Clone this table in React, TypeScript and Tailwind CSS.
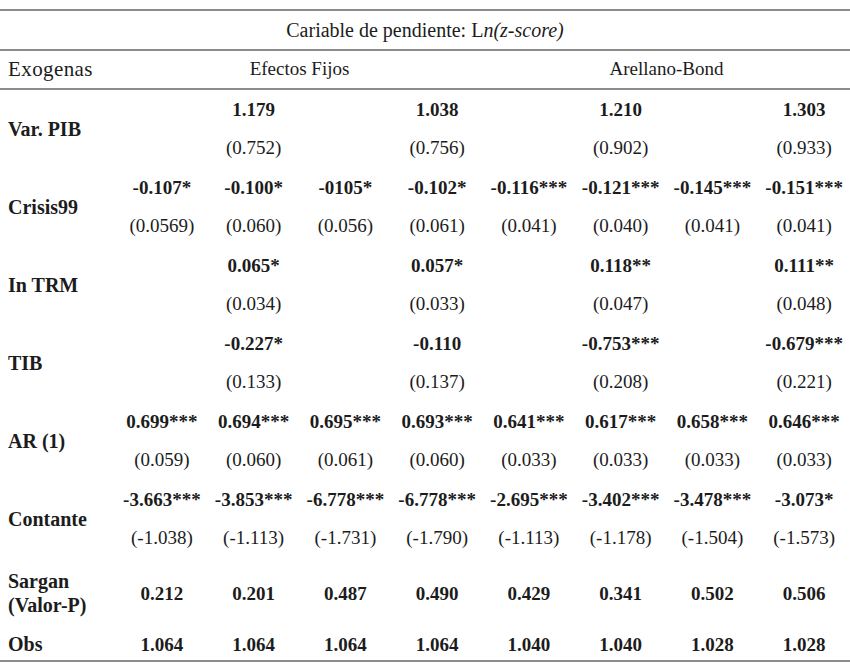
const rows: { label: string[]; top: string[]; sub?: string[]; h?: string }[] = [
  {
    label: ["Var. PIB"],
    top: ["", "1.179", "", "1.038", "", "1.210", "", "1.303"],
    sub: ["", "(0.752)", "", "(0.756)", "", "(0.902)", "", "(0.933)"],
  },
  {
    label: ["Crisis99"],
    top: ["-0.107*", "-0.100*", "-0105*", "-0.102*", "-0.116***", "-0.121***", "-0.145***", "-0.151***"],
    sub: ["(0.0569)", "(0.060)", "(0.056)", "(0.061)", "(0.041)", "(0.040)", "(0.041)", "(0.041)"],
  },
  {
    label: ["In TRM"],
    top: ["", "0.065*", "", "0.057*", "", "0.118**", "", "0.111**"],
    sub: ["", "(0.034)", "", "(0.033)", "", "(0.047)", "", "(0.048)"],
  },
  {
    label: ["TIB"],
    top: ["", "-0.227*", "", "-0.110", "", "-0.753***", "", "-0.679***"],
    sub: ["", "(0.133)", "", "(0.137)", "", "(0.208)", "", "(0.221)"],
  },
  {
    label: ["AR (1)"],
    top: ["0.699***", "0.694***", "0.695***", "0.693***", "0.641***", "0.617***", "0.658***", "0.646***"],
    sub: ["(0.059)", "(0.060)", "(0.061)", "(0.060)", "(0.033)", "(0.033)", "(0.033)", "(0.033)"],
  },
  {
    label: ["Contante"],
    top: ["-3.663***", "-3.853***", "-6.778***", "-6.778***", "-2.695***", "-3.402***", "-3.478***", "-3.073*"],
    sub: ["(-1.038)", "(-1.113)", "(-1.731)", "(-1.790)", "(-1.113)", "(-1.178)", "(-1.504)", "(-1.573)"],
  },
  {
    label: ["Sargan", "(Valor-P)"],
    top: ["0.212", "0.201", "0.487", "0.490", "0.429", "0.341", "0.502", "0.506"],
    h: "h-[70px]",
  },
  {
    label: ["Obs"],
    top: ["1.064", "1.064", "1.064", "1.064", "1.040", "1.040", "1.028", "1.028"],
    h: "h-[32px]",
  },
];

const grid = "grid grid-cols-[116px_repeat(8,minmax(0,1fr))]";

export default function App() {
  return (
    <div
      className="h-[667px] w-[850px] bg-white pt-[9px] text-[19px] text-[#1c1c1c]"
      style={{ fontFamily: '"Liberation Serif", "Times New Roman", serif' }}
    >
      <div className="flex h-[42px] items-center justify-center border-y-2 border-[#8c8c8c] text-[20px]">
        <span>
          Cariable de pendiente: L<i>n(z-score)</i>
        </span>
      </div>
      <div className={`${grid} h-[39px] items-center border-b-2 border-[#8c8c8c]`}>
        <div className="pl-2 text-[21px] tracking-[0.4px]">Exogenas</div>
        <div className="col-span-4 text-center">Efectos Fijos</div>
        <div className="col-span-4 text-center">Arellano-Bond</div>
      </div>
      <div className="border-b-2 border-[#8c8c8c]">
        {rows.map((r) => (
          <div key={r.label.join()} className={`${grid} font-bold`}>
            <div
              className={`flex flex-col justify-center pl-2 text-[20px] leading-6 ${
                r.sub ? "row-span-2" : ""
              }`}
            >
              {r.label.map((l) => (
                <span key={l}>{l}</span>
              ))}
            </div>
            {r.top.map((v, i) => (
              <div key={"t" + i} className={`flex items-center justify-center pt-[2px] ${r.h ?? "h-[39px]"}`}>
                {v}
              </div>
            ))}
            {r.sub
              ? r.sub.map((v, i) => (
                  <div key={"s" + i} className="flex h-[39px] items-center justify-center font-normal">
                    {v}
                  </div>
                ))
              : null}
          </div>
        ))}
      </div>
    </div>
  );
}
